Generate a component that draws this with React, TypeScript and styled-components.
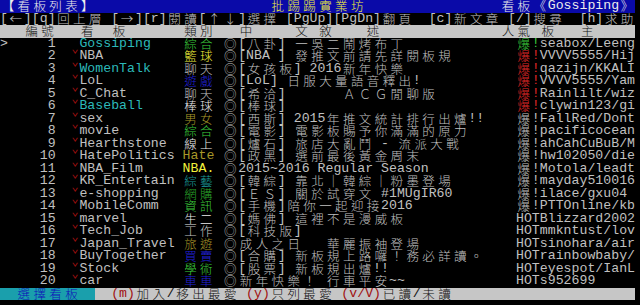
import React from 'react';
import styled, { createGlobalStyle } from 'styled-components';

const COL = 7.9375;
const ROW = 12.5;

const GRAY = '#c0c0c0';
const WHITE = '#ececec';
const CYAN = '#2cbaba';
const GREEN = '#3ccc3c';
const YELLOW = '#f2f23c';
const BLUE = '#2020d8';
const OLIVE = '#a89828';
const DCYAN = '#1a9c9c';
const DGREEN = '#2aa62a';
const RED = '#e02828';
const DRED = '#a01010';
const INK = '#101010';
const TITLE_BG = '#0a0aa8';
const BAR_BG = '#c6c6c6';
const TEAL = '#1a9fac';

const Global = createGlobalStyle`
  html, body { margin: 0; padding: 0; background: #000; }
  body { width: 640px; height: 305px; overflow: hidden; }
`;

const Screen = styled.div`
  width: ${COL * 80}px;
  display: flex;
  flex-direction: column;
  background: #000;
`;

const Row = styled.div<{ $bg?: string }>`
  display: flex;
  height: ${ROW}px;
  background: ${(p) => p.$bg || 'transparent'};
  white-space: pre;
`;

const Seg = styled.span<{ $fg: string; $bg?: string }>`
  display: flex;
  color: ${(p) => p.$fg};
  background: ${(p) => p.$bg || 'transparent'};
`;

const Cell = styled.span<{ $wide: boolean }>`
  flex: 0 0 auto;
  display: block;
  width: ${(p) => (p.$wide ? COL * 2 : COL)}px;
  height: ${ROW}px;
  line-height: ${ROW}px;
  text-align: center;
  font-family: ${(p) =>
    p.$wide ? '"Noto Sans CJK TC", "Noto Sans CJK SC", sans-serif' : '"Liberation Mono", monospace'};
  font-size: ${(p) => (p.$wide ? 12.5 : 13.2)}px;
  font-weight: ${(p) => (p.$wide ? 300 : 400)};
  overflow: visible;
`;

const Mark = styled.span`
  flex: 0 0 auto;
  display: block;
  width: ${COL * 2}px;
  height: ${ROW}px;
  line-height: 9px;
  text-align: right;
  padding-right: 1px;
  box-sizing: border-box;
  font-family: "Noto Sans CJK TC", sans-serif;
  font-size: 11px;
  color: ${DRED};
`;

type S = { t: string; fg?: string; bg?: string; mark?: boolean };

const cw = (ch: string) => ((ch.codePointAt(0) || 0) >= 0x2c0 ? 2 : 1);
const width = (s: string) => [...s].reduce((a, c) => a + cw(c), 0);
const pad = (s: string, n: number) => s + ' '.repeat(Math.max(0, n - width(s)));

function place(items: [number, string, string][], fg = GRAY, bg?: string): S[] {
  const out: S[] = [];
  let col = 0;
  for (const [c, t, color] of items) {
    if (c > col) out.push({ t: ' '.repeat(c - col), fg, bg });
    out.push({ t, fg: color, bg });
    col = Math.max(col, c) + width(t);
  }
  return out;
}

type Board = {
  n: number;
  cur?: boolean;
  read?: boolean;
  name: string;
  nc: string;
  cat: string;
  cc: string;
  title: string;
  pop: 'G' | 'R' | 'W' | 'H';
  bm: string;
};

const boards: Board[] = [
  { n: 1, cur: true, read: true, name: 'Gossiping', nc: CYAN, cat: '綜合', cc: GREEN, title: '[八卦] 一吳二鬧烤布丁', pop: 'G', bm: 'seabox/Leeng' },
  { n: 2, name: 'NBA', nc: GRAY, cat: '籃球', cc: YELLOW, title: '[NBA ] 發推文前請先詳閱板規', pop: 'R', bm: 'VVVV5555/Hij' },
  { n: 3, name: 'WomenTalk', nc: CYAN, cat: '聊天', cc: GRAY, title: '[女孩板] 2016新年快樂', pop: 'R', bm: 'qazijn/KKALI' },
  { n: 4, name: 'LoL', nc: GRAY, cat: '遊戲', cc: BLUE, title: '[LoL] 日服大量語音釋出!', pop: 'R', bm: 'VVVV5555/Yam' },
  { n: 5, name: 'C_Chat', nc: GRAY, cat: '聊天', cc: GRAY, title: '[希洽]       ＡＣＧ閒聊版', pop: 'R', bm: 'Rainlilt/wiz' },
  { n: 6, name: 'Baseball', nc: CYAN, cat: '棒球', cc: WHITE, title: '[棒球]', pop: 'R', bm: 'clywin123/gi' },
  { n: 7, name: 'sex', nc: GRAY, cat: '男女', cc: OLIVE, title: '[西斯] 2015年推文統計排行出爐!!', pop: 'W', bm: 'FallRed/Dont' },
  { n: 8, name: 'movie', nc: GRAY, cat: '綜合', cc: GREEN, title: '[電影] 電影板賜予你滿滿的原力', pop: 'W', bm: 'pacificocean' },
  { n: 9, name: 'Hearthstone', nc: GRAY, cat: '線上', cc: WHITE, title: '[爐石] 旅店大亂鬥 - 流派大戰', pop: 'W', bm: 'ahCahCuBuB/M' },
  { n: 10, name: 'HatePolitics', nc: GRAY, cat: 'Hate', cc: OLIVE, title: '[政黑] 選前最後黃金周末', pop: 'W', bm: 'hw102050/die' },
  { n: 11, name: 'NBA_Film', nc: GRAY, cat: 'NBA.', cc: YELLOW, title: '2015~2016 Regular Season', pop: 'W', bm: 'Motola/leadt' },
  { n: 12, name: 'KR_Entertain', nc: GRAY, cat: '綜藝', cc: DCYAN, title: '[韓綜] 靠北｜韓綜｜粉墨登場', pop: 'W', bm: 'mayday510016' },
  { n: 13, name: 'e-shopping', nc: GRAY, cat: '網購', cc: DGREEN, title: '[ＥＳ] 關於試穿文 #1MUgIR60', pop: 'W', bm: 'ilace/gxu04' },
  { n: 14, name: 'MobileComm', nc: GRAY, cat: '資訊', cc: GREEN, title: '[手機]陪你一起迎接2016', pop: 'W', bm: 'PTTOnline/kb' },
  { n: 15, name: 'marvel', nc: GRAY, cat: '生二', cc: WHITE, title: '[媽佛] 這裡不是漫威板', pop: 'H', bm: 'Blizzard2002' },
  { n: 16, name: 'Tech_Job', nc: GRAY, cat: '工作', cc: GRAY, title: '[科技版]', pop: 'H', bm: 'mmkntust/lov' },
  { n: 17, name: 'Japan_Travel', nc: GRAY, cat: '旅遊', cc: OLIVE, title: '成人之日   華麗振袖登場', pop: 'H', bm: 'sinohara/air' },
  { n: 18, name: 'BuyTogether', nc: GRAY, cat: '買賣', cc: BLUE, title: '[合購] 新板規上路囉！務必詳讀。', pop: 'H', bm: 'rainbowbaby/' },
  { n: 19, name: 'Stock', nc: GRAY, cat: '學術', cc: GREEN, title: '[股票] 新板規出爐!!', pop: 'H', bm: 'eyespot/IanL' },
  { n: 20, name: 'car', nc: GRAY, cat: '車車', cc: BLUE, title: '新年快樂！ 行車平安~~', pop: 'H', bm: 's952699' },
];

function boardLine(b: Board): S[] {
  const segs: S[] = [];
  segs.push({ t: (b.cur ? '>' : ' ') + ' ' + String(b.n).padStart(5, ' ') + ' ', fg: GRAY });
  if (b.read) segs.push({ t: '  ', fg: GRAY });
  else segs.push({ t: 'ˇ', mark: true });
  segs.push({ t: pad(b.name, 13), fg: b.nc });
  segs.push({ t: pad(b.cat, 4), fg: b.cc });
  segs.push({ t: ' ' + pad('◎' + b.title, 37), fg: GRAY });
  if (b.pop === 'H') segs.push({ t: 'HOT', fg: GRAY });
  else {
    const c = b.pop === 'G' ? GREEN : b.pop === 'R' ? RED : GRAY;
    segs.push({ t: '爆', fg: c });
    segs.push({ t: '!', fg: b.pop === 'W' ? GRAY : c });
  }
  segs.push({ t: b.bm, fg: GRAY });
  return segs;
}

const titleLine = place(
  [
    [0, '【看板列表】', WHITE],
    [34, '批踢踢實業坊', YELLOW],
    [63, '看板《Gossiping》', WHITE],
  ],
  WHITE
);

const keysLine = place([
  [0, '[←][q]回上層 [→][r]閱讀[↑↓]選擇 [PgUp][PgDn]翻頁  [c]新文章 [/]搜尋  [h]求助', GRAY],
]);

const headLine = place(
  [
    [3, '編號', INK],
    [10, '看', INK],
    [14, '板', INK],
    [23, '類別', INK],
    [30, '中', INK],
    [37, '文', INK],
    [40, '敘', INK],
    [46, '述', INK],
    [63, '人氣', INK],
    [68, '板', INK],
    [73, '主', INK],
  ],
  INK
);

const statusLine: S[] = [
  { t: '  選擇看板  ', fg: '#1010b8', bg: TEAL },
  { t: '  ', fg: INK, bg: BAR_BG },
  { t: '(m)', fg: DRED, bg: BAR_BG },
  { t: '加入/移出最愛 ', fg: INK, bg: BAR_BG },
  { t: '(y)', fg: DRED, bg: BAR_BG },
  { t: '只列最愛 ', fg: INK, bg: BAR_BG },
  { t: '(v/V)', fg: DRED, bg: BAR_BG },
  { t: pad('已讀/未讀', 80 - 48), fg: INK, bg: BAR_BG },
];

function Line({ segs, bg }: { segs: S[]; bg?: string }) {
  return (
    <Row $bg={bg}>
      {segs.map((s, i) =>
        s.mark ? (
          <Mark key={i}>{s.t}</Mark>
        ) : (
          <Seg key={i} $fg={s.fg || GRAY} $bg={s.bg}>
            {[...s.t].map((ch, j) => (
              <Cell key={j} $wide={cw(ch) === 2}>
                {ch}
              </Cell>
            ))}
          </Seg>
        )
      )}
    </Row>
  );
}

export default function App() {
  return (
    <>
      <Global />
      <Screen>
        <Line segs={titleLine} bg={TITLE_BG} />
        <Line segs={keysLine} />
        <Line segs={headLine} bg={BAR_BG} />
        {boards.map((b) => (
          <Line key={b.n} segs={boardLine(b)} />
        ))}
        <Line segs={statusLine} />
      </Screen>
    </>
  );
}
